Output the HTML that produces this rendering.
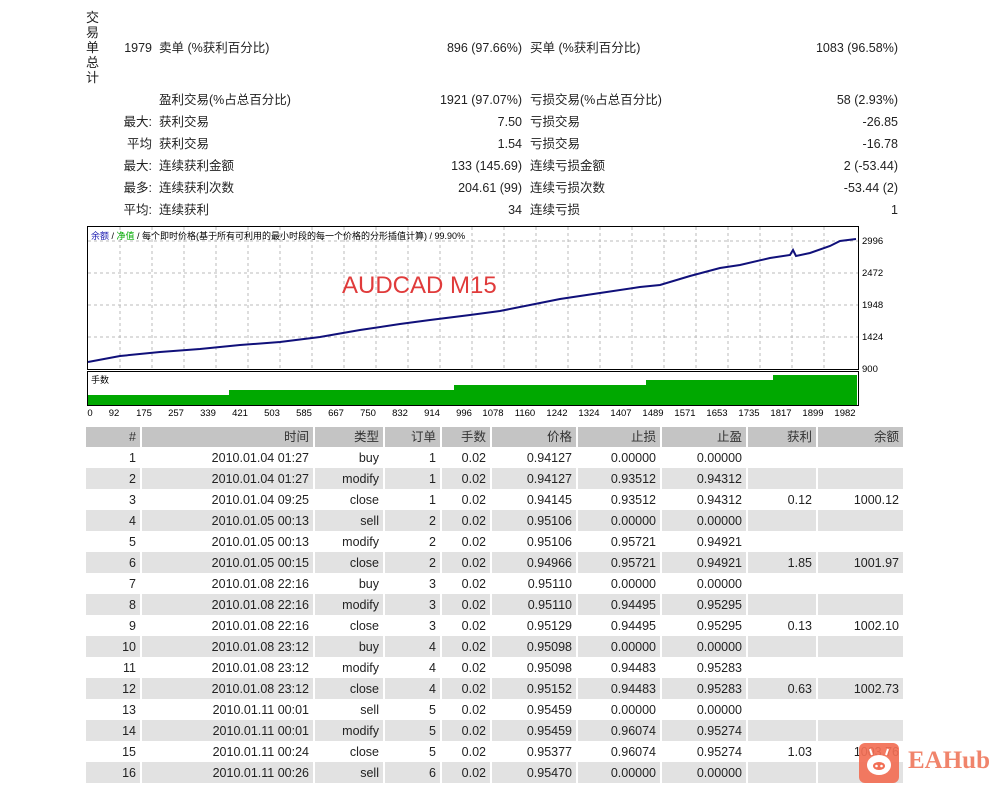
<!DOCTYPE html>
<html><head><meta charset="utf-8"><style>
body{margin:0;width:999px;height:788px;background:#fff;font-family:"Liberation Sans","Noto Sans CJK SC",sans-serif;font-size:12.5px;color:#222;position:relative;overflow:hidden}
.a{position:absolute;white-space:nowrap;line-height:16px;height:16px}
.r{text-align:right}
table{position:absolute;left:84px;top:427px;border-collapse:collapse;font-size:12.5px;line-height:16px}
td{height:21px;padding:0 4px 0 0;text-align:right;border-left:2px solid #fff;box-sizing:border-box}
tr.h td{background:#c4c4c4;height:20px;color:#333}
tr:nth-child(odd):not(.h) td{background:#e2e2e2}
</style></head><body>
<div class="a" style="left:86px;top:10px;width:14px;height:auto;line-height:15px;font-size:13px;white-space:normal">交易单总计</div>
<div class="a r" style="left:100px;top:40px;width:52px">1979</div>
<div class="a" style="left:159px;top:40px">卖单 (%获利百分比)</div>
<div class="a r" style="left:380px;top:40px;width:142px">896 (97.66%)</div>
<div class="a" style="left:530px;top:40px">买单 (%获利百分比)</div>
<div class="a r" style="left:750px;top:40px;width:148px">1083 (96.58%)</div>

<div class="a" style="left:159px;top:92px">盈利交易(%占总百分比)</div><div class="a r" style="left:380px;top:92px;width:142px">1921 (97.07%)</div><div class="a" style="left:530px;top:92px">亏损交易(%占总百分比)</div><div class="a r" style="left:750px;top:92px;width:148px">58 (2.93%)</div>
<div class="a r" style="left:100px;top:114px;width:52px">最大:</div><div class="a" style="left:159px;top:114px">获利交易</div><div class="a r" style="left:380px;top:114px;width:142px">7.50</div><div class="a" style="left:530px;top:114px">亏损交易</div><div class="a r" style="left:750px;top:114px;width:148px">-26.85</div>
<div class="a r" style="left:100px;top:136px;width:52px">平均</div><div class="a" style="left:159px;top:136px">获利交易</div><div class="a r" style="left:380px;top:136px;width:142px">1.54</div><div class="a" style="left:530px;top:136px">亏损交易</div><div class="a r" style="left:750px;top:136px;width:148px">-16.78</div>
<div class="a r" style="left:100px;top:158px;width:52px">最大:</div><div class="a" style="left:159px;top:158px">连续获利金额</div><div class="a r" style="left:380px;top:158px;width:142px">133 (145.69)</div><div class="a" style="left:530px;top:158px">连续亏损金额</div><div class="a r" style="left:750px;top:158px;width:148px">2 (-53.44)</div>
<div class="a r" style="left:100px;top:180px;width:52px">最多:</div><div class="a" style="left:159px;top:180px">连续获利次数</div><div class="a r" style="left:380px;top:180px;width:142px">204.61 (99)</div><div class="a" style="left:530px;top:180px">连续亏损次数</div><div class="a r" style="left:750px;top:180px;width:148px">-53.44 (2)</div>
<div class="a r" style="left:100px;top:202px;width:52px">平均:</div><div class="a" style="left:159px;top:202px">连续获利</div><div class="a r" style="left:380px;top:202px;width:142px">34</div><div class="a" style="left:530px;top:202px">连续亏损</div><div class="a r" style="left:750px;top:202px;width:148px">1</div>

<svg class="a" style="left:0;top:0;height:425px;line-height:normal" width="999" height="425">
<g stroke="#bbb" stroke-dasharray="3,3" stroke-width="1">
<path d="M88 241H858M88 273H858M88 305H858M88 337H858"/>
<path d="M120 227V369M152 227V369M184 227V369M216 227V369M248 227V369M280 227V369M312 227V369M344 227V369M376 227V369M408 227V369M440 227V369M472 227V369M504 227V369M536 227V369M568 227V369M600 227V369M632 227V369M664 227V369M696 227V369M728 227V369M760 227V369M792 227V369M824 227V369"/>
</g>
<rect x="87.5" y="226.5" width="771" height="143" fill="none" stroke="#000"/>
<rect x="87.5" y="371.5" width="771" height="34" fill="none" stroke="#000"/>
<path d="M88 405V395H229V390H231V390H454V385H464V385H646V380H773V375H857V405Z" fill="#00a800"/>
<polyline fill="none" stroke="#10107a" stroke-width="2" points="88,362 120,356 160,352 200,349 240,345 280,342 320,337 360,330 400,324 430,320 470,315 500,311 530,305 560,299 600,293 640,287 660,285 690,276 720,268 740,265 770,258 790,255 793,250 796,256 810,253 830,246 840,241 856,239"/>
<text x="91" y="239" font-size="9" fill="#000" font-family="Liberation Sans,Noto Sans CJK SC,sans-serif"><tspan fill="#1a1ab0">余额</tspan> / <tspan fill="#0a0">净值</tspan> / 每个即时价格(基于所有可利用的最小时段的每一个价格的分形插值计算) / 99.90%</text>
<text x="342" y="293" font-size="24" fill="#e03b3b" font-family="Liberation Sans,sans-serif">AUDCAD M15</text>
<text x="91" y="383" font-size="9" fill="#000" font-family="Noto Sans CJK SC,sans-serif">手数</text>
<g font-size="9.5" fill="#000" font-family="Liberation Sans,sans-serif">
<text x="862" y="244">2996</text><text x="862" y="276">2472</text><text x="862" y="308">1948</text><text x="862" y="340">1424</text><text x="862" y="372">900</text>
<g text-anchor="middle"><text x="90" y="416">0</text><text x="114" y="416">92</text><text x="144" y="416">175</text><text x="176" y="416">257</text><text x="208" y="416">339</text><text x="240" y="416">421</text><text x="272" y="416">503</text><text x="304" y="416">585</text><text x="336" y="416">667</text><text x="368" y="416">750</text><text x="400" y="416">832</text><text x="432" y="416">914</text><text x="464" y="416">996</text><text x="493" y="416">1078</text><text x="525" y="416">1160</text><text x="557" y="416">1242</text><text x="589" y="416">1324</text><text x="621" y="416">1407</text><text x="653" y="416">1489</text><text x="685" y="416">1571</text><text x="717" y="416">1653</text><text x="749" y="416">1735</text><text x="781" y="416">1817</text><text x="813" y="416">1899</text><text x="845" y="416">1982</text></g>
</g>
</svg>

<table>
<colgroup><col style="width:56px"><col style="width:173px"><col style="width:70px"><col style="width:57px"><col style="width:50px"><col style="width:86px"><col style="width:84px"><col style="width:86px"><col style="width:70px"><col style="width:86px"></colgroup>
<tr class="h"><td>#</td><td>时间</td><td>类型</td><td>订单</td><td>手数</td><td>价格</td><td>止损</td><td>止盈</td><td>获利</td><td>余额</td></tr>
<tr><td>1</td><td>2010.01.04 01:27</td><td>buy</td><td>1</td><td>0.02</td><td>0.94127</td><td>0.00000</td><td>0.00000</td><td></td><td></td></tr>
<tr><td>2</td><td>2010.01.04 01:27</td><td>modify</td><td>1</td><td>0.02</td><td>0.94127</td><td>0.93512</td><td>0.94312</td><td></td><td></td></tr>
<tr><td>3</td><td>2010.01.04 09:25</td><td>close</td><td>1</td><td>0.02</td><td>0.94145</td><td>0.93512</td><td>0.94312</td><td>0.12</td><td>1000.12</td></tr>
<tr><td>4</td><td>2010.01.05 00:13</td><td>sell</td><td>2</td><td>0.02</td><td>0.95106</td><td>0.00000</td><td>0.00000</td><td></td><td></td></tr>
<tr><td>5</td><td>2010.01.05 00:13</td><td>modify</td><td>2</td><td>0.02</td><td>0.95106</td><td>0.95721</td><td>0.94921</td><td></td><td></td></tr>
<tr><td>6</td><td>2010.01.05 00:15</td><td>close</td><td>2</td><td>0.02</td><td>0.94966</td><td>0.95721</td><td>0.94921</td><td>1.85</td><td>1001.97</td></tr>
<tr><td>7</td><td>2010.01.08 22:16</td><td>buy</td><td>3</td><td>0.02</td><td>0.95110</td><td>0.00000</td><td>0.00000</td><td></td><td></td></tr>
<tr><td>8</td><td>2010.01.08 22:16</td><td>modify</td><td>3</td><td>0.02</td><td>0.95110</td><td>0.94495</td><td>0.95295</td><td></td><td></td></tr>
<tr><td>9</td><td>2010.01.08 22:16</td><td>close</td><td>3</td><td>0.02</td><td>0.95129</td><td>0.94495</td><td>0.95295</td><td>0.13</td><td>1002.10</td></tr>
<tr><td>10</td><td>2010.01.08 23:12</td><td>buy</td><td>4</td><td>0.02</td><td>0.95098</td><td>0.00000</td><td>0.00000</td><td></td><td></td></tr>
<tr><td>11</td><td>2010.01.08 23:12</td><td>modify</td><td>4</td><td>0.02</td><td>0.95098</td><td>0.94483</td><td>0.95283</td><td></td><td></td></tr>
<tr><td>12</td><td>2010.01.08 23:12</td><td>close</td><td>4</td><td>0.02</td><td>0.95152</td><td>0.94483</td><td>0.95283</td><td>0.63</td><td>1002.73</td></tr>
<tr><td>13</td><td>2010.01.11 00:01</td><td>sell</td><td>5</td><td>0.02</td><td>0.95459</td><td>0.00000</td><td>0.00000</td><td></td><td></td></tr>
<tr><td>14</td><td>2010.01.11 00:01</td><td>modify</td><td>5</td><td>0.02</td><td>0.95459</td><td>0.96074</td><td>0.95274</td><td></td><td></td></tr>
<tr><td>15</td><td>2010.01.11 00:24</td><td>close</td><td>5</td><td>0.02</td><td>0.95377</td><td>0.96074</td><td>0.95274</td><td>1.03</td><td>1003.76</td></tr>
<tr><td>16</td><td>2010.01.11 00:26</td><td>sell</td><td>6</td><td>0.02</td><td>0.95470</td><td>0.00000</td><td>0.00000</td><td></td><td></td></tr>
</table>

<svg class="a" style="left:859px;top:743px;height:40px" width="40" height="40"><rect width="40" height="40" rx="6" fill="#f26f55" opacity=".92"/><ellipse cx="20" cy="22" rx="12" ry="10" fill="#fff"/><ellipse cx="20" cy="23" rx="6" ry="4" fill="#f26f55"/><circle cx="17.5" cy="23" r="1.3" fill="#fff"/><circle cx="22.5" cy="23" r="1.3" fill="#fff"/><path d="M13 12L11 6M27 12L29 6" stroke="#fff" stroke-width="2"/></svg>
<div class="a" style="left:908px;top:746px;height:30px;line-height:30px;font-size:25px;color:#f0846b;font-family:'Liberation Serif',serif;font-weight:bold">EAHub</div>
</body></html>
